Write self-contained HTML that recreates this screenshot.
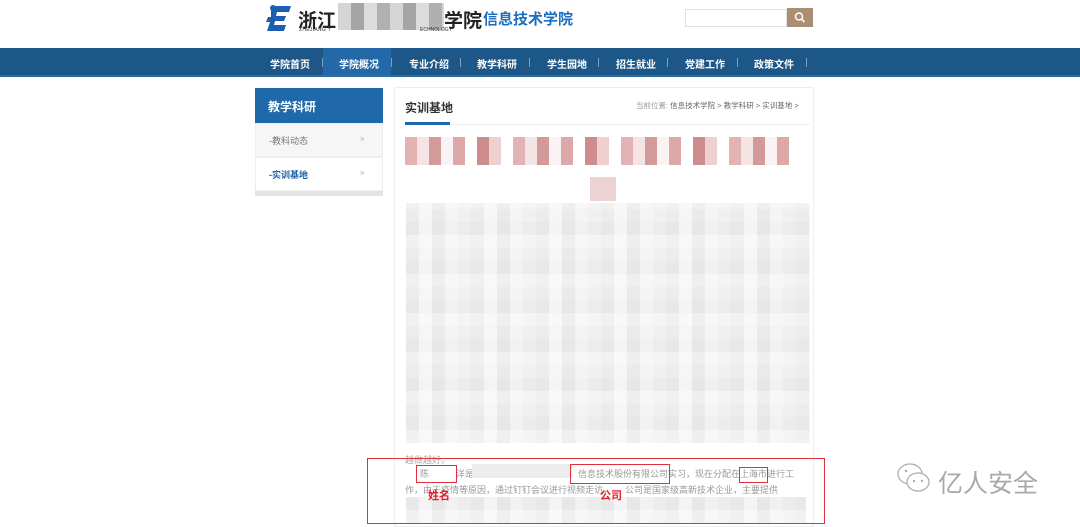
<!DOCTYPE html>
<html><head><meta charset="utf-8"><style>
*{margin:0;padding:0;box-sizing:border-box}
body{width:1080px;height:527px;overflow:hidden;background:#fff;font-family:"Liberation Sans","Noto Sans CJK SC",sans-serif;position:relative}
.a{position:absolute}
.nav{top:48px;left:0;width:1080px;height:29px;background:#1d5788;border-bottom:2px solid #2f6ea3}
.nav span{position:absolute;top:8px;font-size:10px;color:#fff;font-weight:bold}
.nav i{position:absolute;top:10px;width:1px;height:9px;background:#7da0c0}
.mos{background-color:#f0f0f0;background-image:
repeating-linear-gradient(90deg,rgba(0,0,0,.015) 0 13px,rgba(255,255,255,.4) 13px 26px,rgba(0,0,0,.025) 26px 39px,rgba(255,255,255,.25) 39px 52px,transparent 52px 65px),
repeating-linear-gradient(0deg,rgba(255,255,255,.3) 0 13px,rgba(0,0,0,.015) 13px 26px,transparent 26px 39px)}
.rb{position:absolute;border:1px solid #e0303a}
.t{position:absolute;font-size:9px;color:#999;white-space:nowrap}
</style></head><body>
<div class="a" style="left:263px;top:4px;width:32px;height:32px">
<svg width="32" height="32" viewBox="0 0 32 32"><path d="M8 2h20l-2 6H14l-1 4h10l-2 5H12l-1 4h12l-2 6H4l3-9H3l2-5h3z" fill="#1c5fb0"/><circle cx="10" cy="4" r="3" fill="#1c5fb0"/></svg></div>
<div class="a" style="left:298px;top:6px;font-size:19px;font-weight:bold;color:#222">浙江</div>
<div class="a" style="left:338px;top:3px;width:106px;height:27px;background:#c0c0c0;background-image:repeating-linear-gradient(90deg,#d5d5d5 0 13px,#a5a5a5 13px 26px,#dcdcdc 26px 39px,#b0b0b0 39px 52px)"></div>
<div class="a" style="left:444px;top:6px;font-size:19px;font-weight:bold;color:#222">学院</div>
<div class="a" style="left:299px;top:27px;font-size:5px;color:#333;letter-spacing:.3px">ZHEJIANG Y</div>
<div class="a" style="left:420px;top:27px;font-size:5px;color:#333">ECHNOLOGY</div>
<div class="a" style="left:483px;top:8px;font-size:15px;font-weight:bold;color:#1c6fc0">信息技术学院</div>
<div class="a" style="left:685px;top:9px;width:102px;height:18px;border:1px solid #e2e2e2"></div>
<div class="a" style="left:787px;top:8px;width:26px;height:19px;background:#a98e72"><svg width="26" height="19"><circle cx="12" cy="8.5" r="3.5" fill="none" stroke="#fff" stroke-width="1.5"/><path d="M14.5 11l3 3" stroke="#fff" stroke-width="1.6"/></svg></div>
<div class="a nav">
<div class="a" style="left:323px;top:0;width:68px;height:27px;background:#2369a8"></div>
<span style="left:270px">学院首页</span><i style="left:322px"></i>
<span style="left:339px">学院概况</span><i style="left:391px"></i>
<span style="left:409px">专业介绍</span><i style="left:460px"></i>
<span style="left:477px">教学科研</span><i style="left:529px"></i>
<span style="left:547px">学生园地</span><i style="left:598px"></i>
<span style="left:616px">招生就业</span><i style="left:667px"></i>
<span style="left:685px">党建工作</span><i style="left:737px"></i>
<span style="left:754px">政策文件</span><i style="left:806px"></i>
</div>
<div class="a" style="left:255px;top:88px;width:128px;height:35px;background:#1f69ab"></div>
<div class="a" style="left:268px;top:98px;font-size:12px;font-weight:bold;color:#fff">教学科研</div>
<div class="a" style="left:255px;top:123px;width:128px;height:34px;background:#f6f6f6;border:1px solid #eee"></div>
<div class="a" style="left:269px;top:134px;font-size:9px;color:#777">-教科动态</div>
<div class="a" style="left:360px;top:134px;font-size:8px;color:#aaa">»</div>
<div class="a" style="left:255px;top:157px;width:128px;height:34px;background:#fff;border:1px solid #eee"></div>
<div class="a" style="left:269px;top:168px;font-size:9px;color:#1e63a6;font-weight:bold">-实训基地</div>
<div class="a" style="left:360px;top:168px;font-size:8px;color:#aaa">»</div>
<div class="a" style="left:255px;top:191px;width:128px;height:5px;background:#e4e4e4"></div>
<div class="a" style="left:394px;top:87px;width:420px;height:440px;border:1px solid #eee"></div>
<div class="a" style="left:405px;top:99px;font-size:12px;font-weight:bold;color:#333">实训基地</div>
<div class="a" style="left:405px;top:124px;width:405px;height:1px;background:#eee"></div>
<div class="a" style="left:405px;top:122px;width:45px;height:3px;background:#1f69ab"></div>
<div class="a" style="left:636px;top:100px;font-size:7.5px;color:#999">当前位置: <span style="color:#666">信息技术学院 &gt; 教学科研 &gt; 实训基地 &gt;</span></div>
<div class="a" style="left:405px;top:137px;width:396px;height:28px;background-image:repeating-linear-gradient(90deg,#e3b3b3 0 12px,#f5e4e4 12px 24px,#d49a9a 24px 36px,#fbf3f3 36px 48px,#dca8a8 48px 60px,#ffffff 60px 72px,#cf8c8c 72px 84px,#eed0d0 84px 96px,#fff 96px 108px)"></div>
<div class="a" style="left:590px;top:177px;width:26px;height:24px;background:#ecd2d2"></div>
<div class="a mos" style="left:406px;top:203px;width:404px;height:240px"></div>
<div class="t" style="left:405px;top:453px;color:#aaa">越做越好。</div>
<div class="t" style="left:420px;top:467px">陈</div>
<div class="t" style="left:456px;top:467px">洋是</div>
<div class="a" style="left:472px;top:464px;width:100px;height:14px;background:#ececec"></div>
<div class="t" style="left:578px;top:467px">信息技术股份有限公司实习，现在分配在上海市进行工</div>
<div class="t" style="left:405px;top:483px">作，由于疫情等原因，通过钉钉会议进行视频走访，</div>
<div class="t" style="left:625px;top:483px">公司是国家级高新技术企业，主要提供</div>
<div class="a mos" style="left:406px;top:497px;width:400px;height:26px"></div>
<div class="rb" style="left:367px;top:458px;width:458px;height:66px"></div>
<div class="rb" style="left:416px;top:465px;width:41px;height:18px"></div>
<div class="rb" style="left:570px;top:464px;width:100px;height:20px"></div>
<div class="rb" style="left:739px;top:467px;width:29px;height:16px"></div>
<div class="a" style="left:428px;top:487px;font-size:11px;font-weight:bold;color:#e0202a">姓名</div>
<div class="a" style="left:600px;top:487px;font-size:11px;font-weight:bold;color:#e0202a">公司</div>
<svg class="a" style="left:896px;top:461px" width="36" height="36" viewBox="0 0 36 36"><ellipse cx="14" cy="13" rx="12" ry="10" fill="none" stroke="#aaa" stroke-width="1.2"/><ellipse cx="22" cy="21" rx="11" ry="9" fill="#fff" stroke="#aaa" stroke-width="1.2"/><circle cx="18" cy="20" r="1.2" fill="#aaa"/><circle cx="26" cy="20" r="1.2" fill="#aaa"/><circle cx="10" cy="10" r="1.2" fill="#aaa"/></svg>
<div class="a" style="left:938px;top:464px;font-size:25px;color:#a8a8a8">亿人安全</div>
</body></html>
